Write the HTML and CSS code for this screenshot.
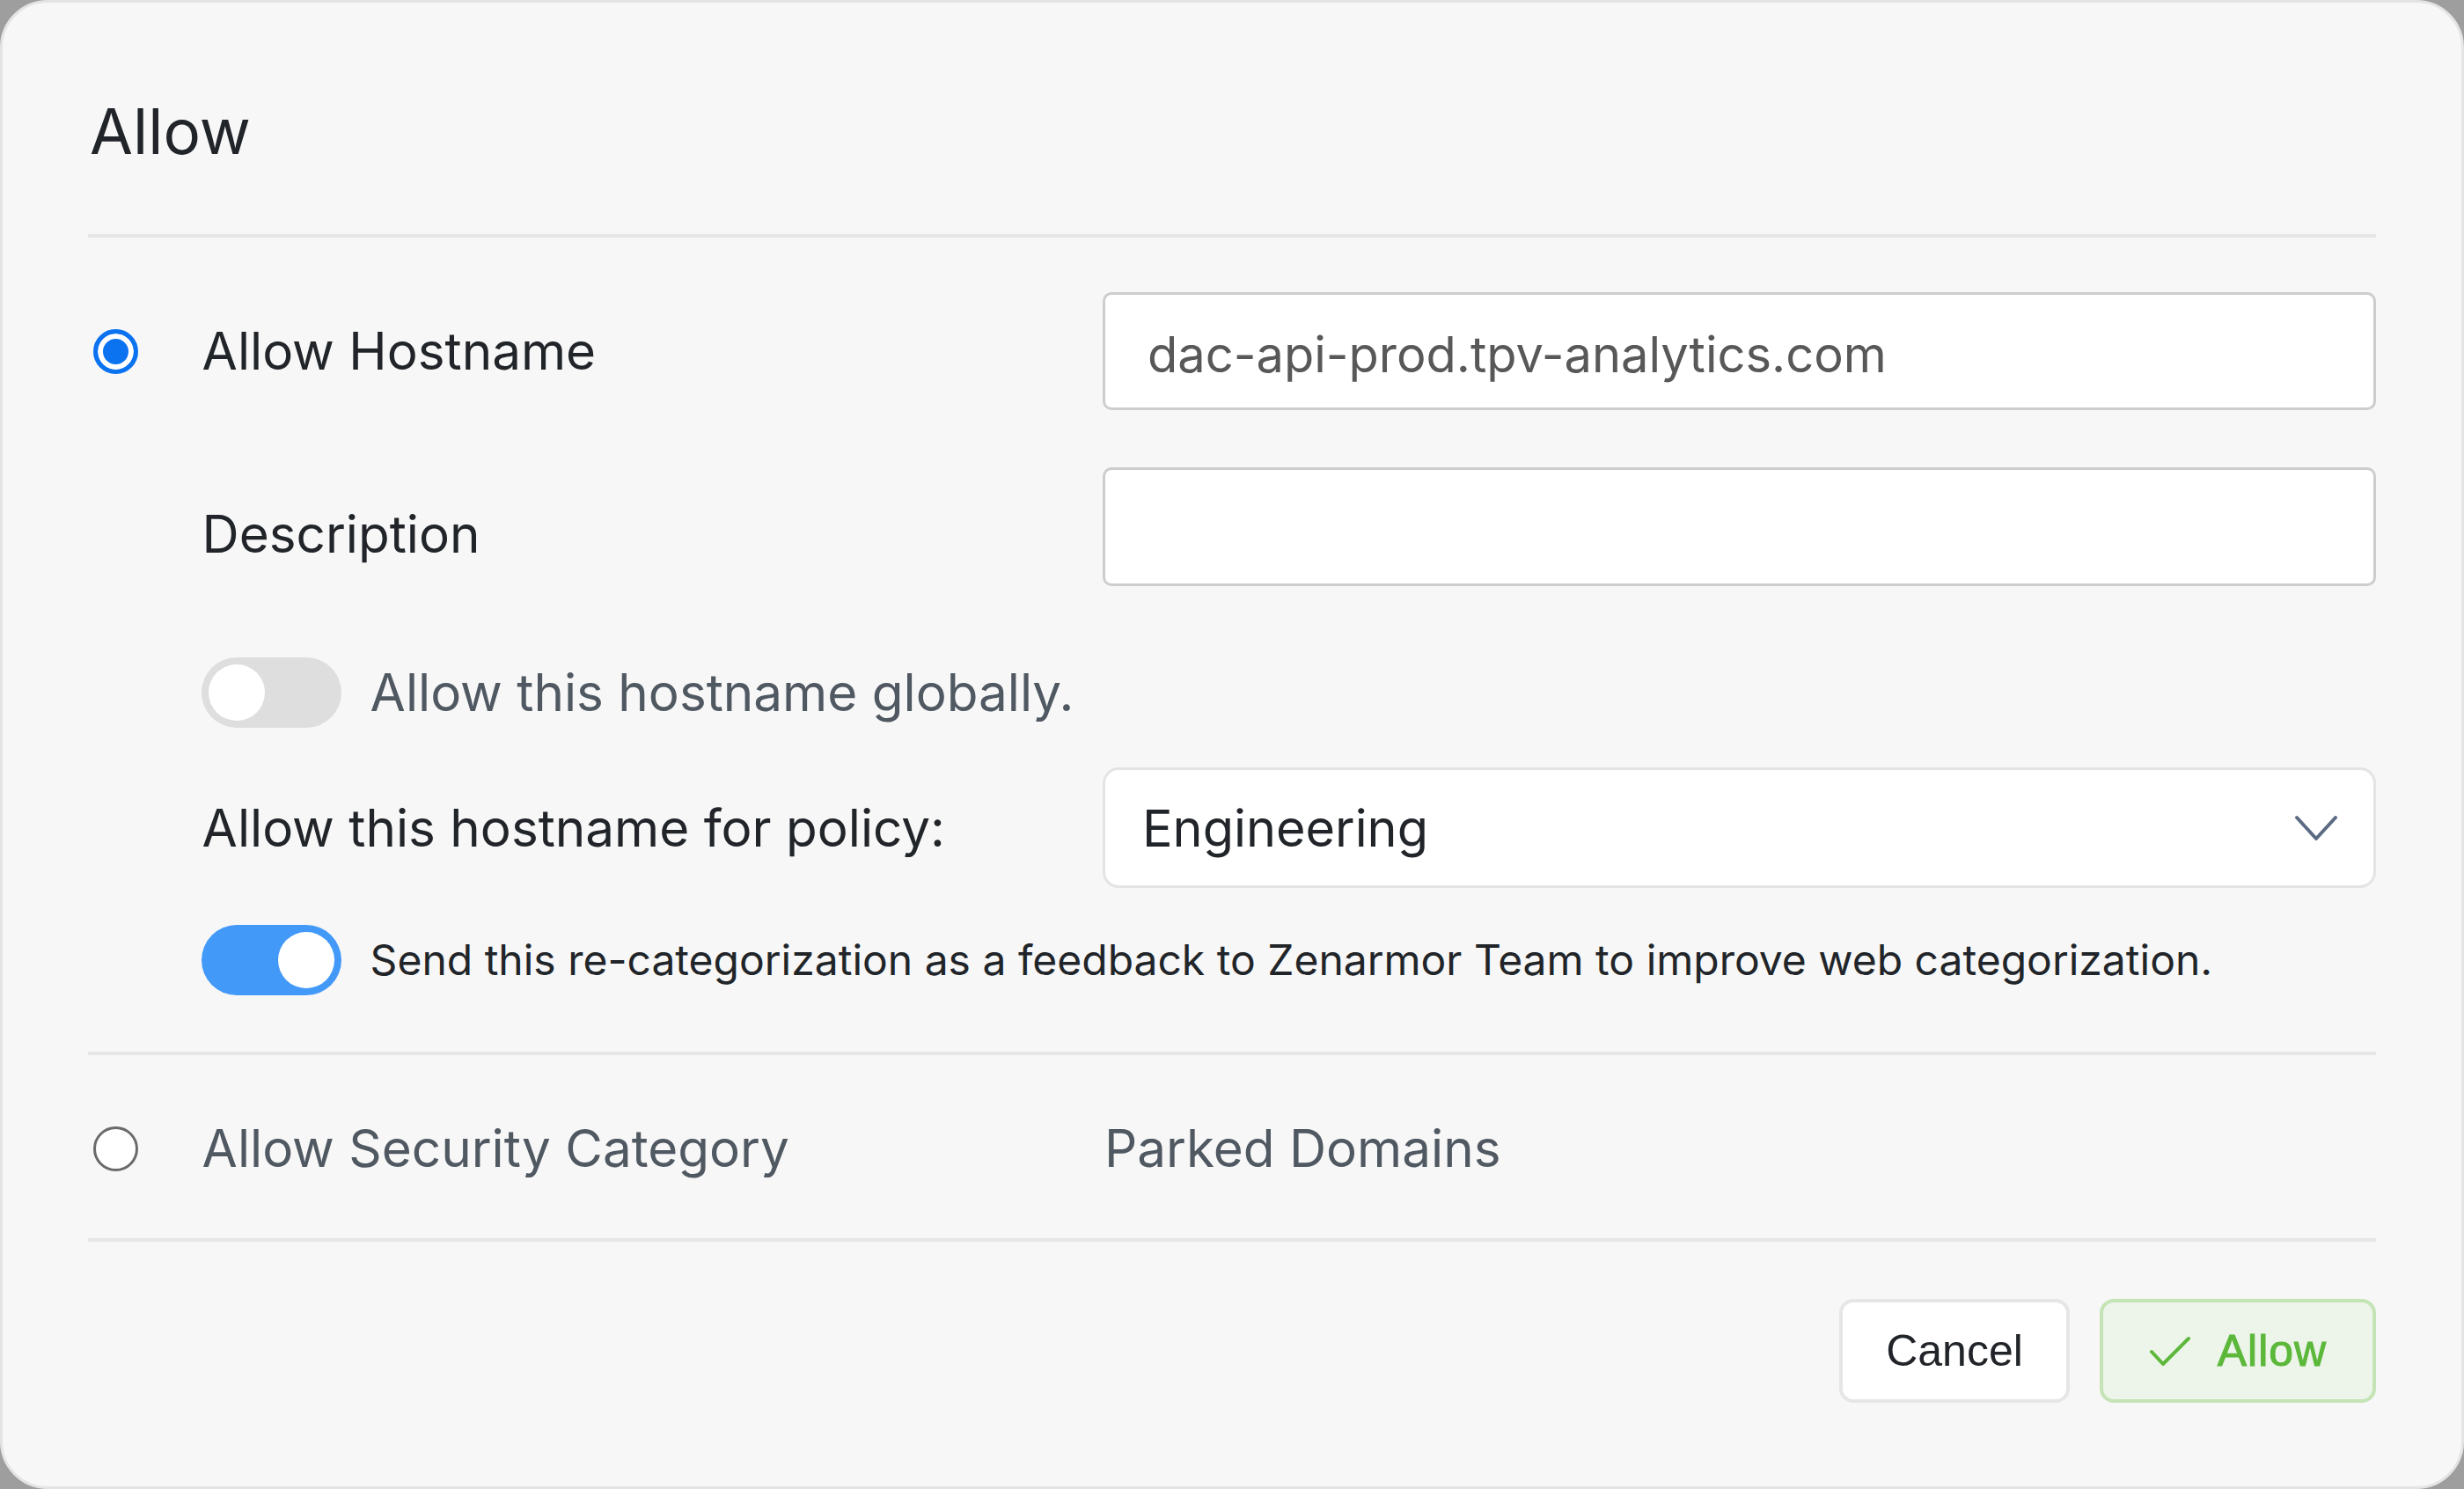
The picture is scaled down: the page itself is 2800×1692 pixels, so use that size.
FILE: index.html
```html
<!DOCTYPE html>
<html lang="en">
<head>
<meta charset="utf-8">
<title>Allow</title>
<link rel="stylesheet" href="styles.css">
</head>
<body>
<div class="dialog">
  <header class="dialog-header">
    <h1 class="dialog-title">Allow</h1>
  </header>

  <section class="section section-hostname">
    <div class="row row-host">
      <span class="radio radio-checked"></span>
      <label class="label">Allow Hostname</label>
      <div class="field input input-filled">dac-api-prod.tpv-analytics.com</div>
    </div>
    <div class="row row-desc">
      <span class="cell-empty"></span>
      <label class="label label-desc">Description</label>
      <div class="field input"></div>
    </div>
    <div class="row row-global">
      <span class="cell-empty"></span>
      <div class="toggle-line">
        <span class="toggle toggle-off"><span class="knob"></span></span>
        <span class="toggle-text muted">Allow this hostname globally.</span>
      </div>
    </div>
    <div class="row row-policy">
      <span class="cell-empty"></span>
      <label class="label">Allow this hostname for policy:</label>
      <div class="field select">
        <span class="select-value">Engineering</span>
        <svg class="chevron" viewBox="0 0 50 30" width="50" height="30" aria-hidden="true">
          <path d="M3 3 L25 27 L47 3" fill="none" stroke="#5b6b82" stroke-width="4" stroke-linecap="round" stroke-linejoin="round"/>
        </svg>
      </div>
    </div>
    <div class="row row-feedback">
      <span class="cell-empty"></span>
      <div class="toggle-line">
        <span class="toggle toggle-on"><span class="knob"></span></span>
        <span class="toggle-text small">Send this re-categorization as a feedback to Zenarmor Team to improve web categorization.</span>
      </div>
    </div>
  </section>

  <section class="section section-category">
    <div class="row row-category">
      <span class="radio"></span>
      <label class="label muted">Allow Security Category</label>
      <span class="category-value muted">Parked Domains</span>
    </div>
  </section>

  <footer class="dialog-footer">
    <button class="btn btn-cancel" type="button">Cancel</button>
    <button class="btn btn-allow" type="button">
      <svg class="check" viewBox="0 0 48 36" width="48" height="36" aria-hidden="true">
        <path d="M3 18 L16 32 L45 3" fill="none" stroke="#5cb83a" stroke-width="4" stroke-linecap="round" stroke-linejoin="round"/>
      </svg>
      <span>Allow</span>
    </button>
  </footer>
</div>
</body>
</html>
```

FILE: styles.css
```css
* { box-sizing: border-box; }

html, body {
  margin: 0;
  padding: 0;
}

body {
  width: 2800px;
  height: 1692px;
  background: #9e9e9e;
  font-family: "Inter", "Noto Sans", "Liberation Sans", sans-serif;
  color: #212529;
  overflow: hidden;
}

.dialog {
  width: 2800px;
  height: 1692px;
  background: #f7f7f7;
  border: 3px solid #e4e4e4;
  border-radius: 54px;
  padding: 0 97px 0 97px;
  display: flex;
  flex-direction: column;
}

.dialog-header {
  padding: 103px 0 74px;
  border-bottom: 4px solid #e6e6e6;
}

.dialog-title {
  margin: 0 0 0 2px;
  font-size: 71px;
  font-weight: 400;
  line-height: 86px;
  color: #212529;
}

.section {
  display: flex;
  flex-direction: column;
  border-bottom: 4px solid #e6e6e6;
}

.section-hostname {
  padding: 62px 0 64px;
}

.section-category {
  padding: 71px 0 85px;
}

.row {
  display: grid;
  grid-template-columns: 129.6px 1023.4px 1fr;
  align-items: center;
}

.row-host { height: 134px; }
.row-desc { height: 135px; margin-top: 65px; }
.row-global { height: 80px; margin-top: 81px; }
.row-policy { height: 137px; margin-top: 45px; }
.row-feedback { height: 80px; margin-top: 42px; }
.row-category { height: 52px; }

.label {
  font-size: 58.4px;
  line-height: 70px;
  color: #212529;
  white-space: nowrap;
}

.label-desc {
  padding-top: 16px;
}

.muted {
  color: #505862;
}

.radio {
  display: block;
  width: 51px;
  height: 51px;
  margin-left: 6px;
  border-radius: 50%;
  border: 3.5px solid #6a6a6a;
  background: #ffffff;
}

.radio-checked {
  border: 5px solid #0b72f0;
  background: #0b72f0;
  box-shadow: inset 0 0 0 6px #ffffff;
}

.field {
  height: 100%;
  background: #ffffff;
  display: flex;
  align-items: center;
}

.input {
  border: 3.5px solid #cdcdcd;
  border-radius: 10px;
  padding: 8px 46px 0 48px;
  font-size: 56px;
  color: #585858;
}

.select {
  border: 3px solid #e4e4e4;
  border-radius: 18px;
  padding: 0 40px 0 42px;
  justify-content: space-between;
  font-size: 57.6px;
  color: #212529;
}

.chevron {
  display: block;
  margin-top: 0;
}

.category-value {
  font-size: 58.4px;
  line-height: 70px;
  padding-left: 2px;
}

.toggle-line {
  grid-column: 2 / 4;
  display: flex;
  align-items: center;
  gap: 33px;
  margin-left: -1px;
}

.toggle {
  flex: none;
  position: relative;
  width: 159px;
  height: 80px;
  border-radius: 40px;
}

.toggle .knob {
  position: absolute;
  top: 8px;
  width: 64px;
  height: 64px;
  border-radius: 50%;
  background: #ffffff;
}

.toggle-off {
  background: #dedede;
}

.toggle-off .knob {
  left: 8px;
}

.toggle-on {
  background: #4399f8;
}

.toggle-on .knob {
  right: 8px;
}

.toggle-text {
  font-size: 58.4px;
  line-height: 70px;
  white-space: nowrap;
}

.toggle-text.small {
  font-size: 48px;
  color: #212529;
}

.dialog-footer {
  padding-top: 65px;
  display: flex;
  justify-content: flex-end;
  gap: 34px;
}

.btn {
  height: 118px;
  border-radius: 16px;
  font-family: "Liberation Sans", Arial, sans-serif;
  font-size: 50px;
  display: flex;
  align-items: center;
  justify-content: center;
  cursor: pointer;
}

.btn-cancel {
  width: 262px;
  background: #ffffff;
  border: 4px solid #e6e6e6;
  color: #212529;
}

.btn-allow {
  width: 314px;
  background: #edf4ea;
  border: 4px solid #c4e4b6;
  color: #5cb83a;
  gap: 30px;
  letter-spacing: 1px;
  -webkit-text-stroke: 1px #5cb83a;
}

.check {
  display: block;
  margin-top: 2px;
}
```
